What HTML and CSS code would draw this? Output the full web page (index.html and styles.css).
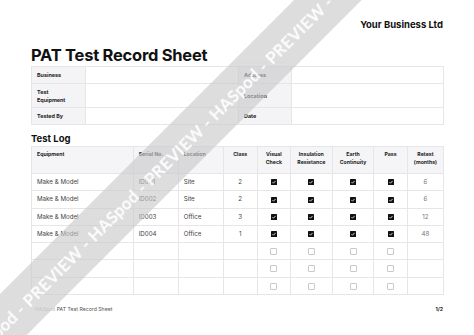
FILE: index.html
```html
<!DOCTYPE html>
<html lang="en">
<head>
<meta charset="utf-8">
<title>PAT Test Record Sheet</title>
<link rel="stylesheet" href="styles.css">
</head>
<body>
<div class="sheet">
<div class="page">
  <div class="brand">Your Business Ltd</div>
  <h1 class="title">PAT Test Record Sheet</h1>
  <table class="info">
    <colgroup><col class="c-l1"><col class="c-v1"><col class="c-l2"><col class="c-v2"></colgroup>
    <tr class="r-short"><th>Business</th><td></td><th>Address</th><td></td></tr>
    <tr class="r-tall"><th>Test<br>Equipment</th><td></td><th>Location</th><td></td></tr>
    <tr class="r-short"><th>Tested By</th><td></td><th>Date</th><td></td></tr>
  </table>
  <h2 class="section">Test Log</h2>
  <table class="log">
    <colgroup>
      <col class="w-eq"><col class="w-sn"><col class="w-loc"><col class="w-cls"><col class="w-vis"><col class="w-ins"><col class="w-ear"><col class="w-pass"><col class="w-ret">
    </colgroup>
    <thead>
      <tr>
        <th class="left">Equipment</th>
        <th class="left">Serial No.</th>
        <th class="left">Location</th>
        <th>Class</th>
        <th>Visual<br>Check</th>
        <th>Insulation<br>Resistance</th>
        <th>Earth<br>Continuity</th>
        <th>Pass</th>
        <th>Retest<br>(months)</th>
      </tr>
    </thead>
    <tbody>
      <tr><td class="left">Make &amp; Model</td><td class="left">ID001</td><td class="left">Site</td><td>2</td><td><span class="cb on"></span></td><td><span class="cb on"></span></td><td><span class="cb on"></span></td><td><span class="cb on"></span></td><td class="muted">6</td></tr>
      <tr><td class="left">Make &amp; Model</td><td class="left">ID002</td><td class="left">Site</td><td>2</td><td><span class="cb on"></span></td><td><span class="cb on"></span></td><td><span class="cb on"></span></td><td><span class="cb on"></span></td><td class="muted">6</td></tr>
      <tr><td class="left">Make &amp; Model</td><td class="left">ID003</td><td class="left">Office</td><td>3</td><td><span class="cb on"></span></td><td><span class="cb on"></span></td><td><span class="cb on"></span></td><td><span class="cb on"></span></td><td class="muted">12</td></tr>
      <tr><td class="left">Make &amp; Model</td><td class="left">ID004</td><td class="left">Office</td><td>1</td><td><span class="cb on"></span></td><td><span class="cb on"></span></td><td><span class="cb on"></span></td><td><span class="cb on"></span></td><td class="muted">48</td></tr>
      <tr><td></td><td></td><td></td><td></td><td><span class="cb"></span></td><td><span class="cb"></span></td><td><span class="cb"></span></td><td><span class="cb"></span></td><td></td></tr>
      <tr><td></td><td></td><td></td><td></td><td><span class="cb"></span></td><td><span class="cb"></span></td><td><span class="cb"></span></td><td><span class="cb"></span></td><td></td></tr>
      <tr><td></td><td></td><td></td><td></td><td><span class="cb"></span></td><td><span class="cb"></span></td><td><span class="cb"></span></td><td><span class="cb"></span></td><td></td></tr>
    </tbody>
  </table>
  <div class="foot">
    <span class="foot-doc"><span class="foot-pre">HASpod</span> PAT Test Record Sheet</span>
    <span class="foot-page">1/2</span>
  </div>
</div>
<div class="watermark"><span class="wm-text">HASpod - PREVIEW - HASpod - PREVIEW - HASpod - PREVIEW - HASpod</span></div>
</div>
</body>
</html>
```
FILE: styles.css
```css
html, body {
  margin: 0;
  padding: 0;
  background: #ffffff;
  overflow: hidden;
}
body {
  font-family: Inter, "Open Sans", "Liberation Sans", sans-serif;
  color: #1a1a1a;
}
.sheet {
  position: relative;
  width: 474px;
  height: 335px;
  overflow: hidden;
}
.page {
  padding: 19px 31px 0 31px;
  display: flex;
  flex-direction: column;
}
.brand {
  align-self: flex-end;
  font-size: 9.5px;
  line-height: 12px;
  font-weight: 700;
  color: #111;
}
.title {
  margin: 14px 0 1px 0;
  font-size: 16.5px;
  line-height: 20px;
  font-weight: 700;
  color: #111;
  letter-spacing: -0.25px;
}
table {
  border-collapse: collapse;
  table-layout: fixed;
  width: 412px;
}
.info th, .info td {
  border: 1px solid #e6e6e8;
  padding: 0 0 0 5px;
}
.info th {
  background: #f4f4f6;
  text-align: left;
  font-size: 5.4px;
  line-height: 8px;
  font-weight: 700;
  color: #222;
}
.c-l1 { width: 54px; }
.c-v1 { width: 153px; }
.c-l2 { width: 53px; }
.c-v2 { width: 152px; }
.r-short th, .r-short td { height: 16px; }
.r-tall th, .r-tall td { height: 23px; }
.section {
  margin: 8px 0 1px 0;
  font-size: 9.5px;
  line-height: 12px;
  font-weight: 700;
  color: #111;
}
.w-eq { width: 101.7px; }
.w-sn { width: 45px; }
.w-loc { width: 45px; }
.w-cls { width: 34px; }
.w-vis { width: 33.3px; }
.w-ins { width: 41.7px; }
.w-ear { width: 41.7px; }
.w-pass { width: 33.3px; }
.w-ret { width: 36.6px; }
.log th, .log td {
  border: 1px solid #e6e6e8;
  text-align: center;
}
.log th {
  background: #f5f5f7;
  height: 22px;
  vertical-align: top;
  padding: 4px 2px 0 2px;
  font-size: 5.2px;
  line-height: 7.7px;
  font-weight: 700;
  color: #222;
}
.log td {
  height: 16.3px;
  padding: 0 2px;
  vertical-align: middle;
  font-size: 6.2px;
  line-height: 8px;
  color: #444;
}
.log th.left, .log td.left {
  text-align: left;
  padding-left: 5px;
}
.log td.muted { color: #777; }
.cb {
  display: inline-block;
  width: 5px;
  height: 5px;
  border: 1px solid #c9c9cc;
  border-radius: 1px;
  vertical-align: middle;
}
.cb.on {
  width: 6px;
  height: 6px;
  border: none;
  border-radius: 0.5px;
  background: #111 url("data:image/svg+xml;utf8,<svg xmlns='http://www.w3.org/2000/svg' viewBox='0 0 6 6'><path d='M1.5 3.2 L2.5 4.2 L4.6 1.9' fill='none' stroke='white' stroke-width='0.8'/></svg>") no-repeat center / 6px 6px;
}
.foot {
  margin-top: 11px;
  display: flex;
  justify-content: space-between;
  align-items: center;
  font-size: 5.2px;
  line-height: 7px;
  color: #555;
}
.foot-doc { padding-left: 4px; }
.foot-pre { color: #bbb; }
.foot-page {
  font-weight: 700;
  color: #222;
}
.watermark {
  position: absolute;
  left: -136px;
  top: 140px;
  width: 600px;
  height: 48px;
  transform: rotate(-45deg);
  background: rgba(200, 200, 202, 0.62);
  backdrop-filter: blur(2.5px);
  overflow: hidden;
  display: flex;
  align-items: center;
}
.wm-text {
  white-space: nowrap;
  padding-left: 24px;
  font-family: Lato, "Open Sans", sans-serif;
  font-weight: 700;
  font-size: 16.8px;
  color: rgba(255, 255, 255, 0.95);
  letter-spacing: 0.3px;
}
```
